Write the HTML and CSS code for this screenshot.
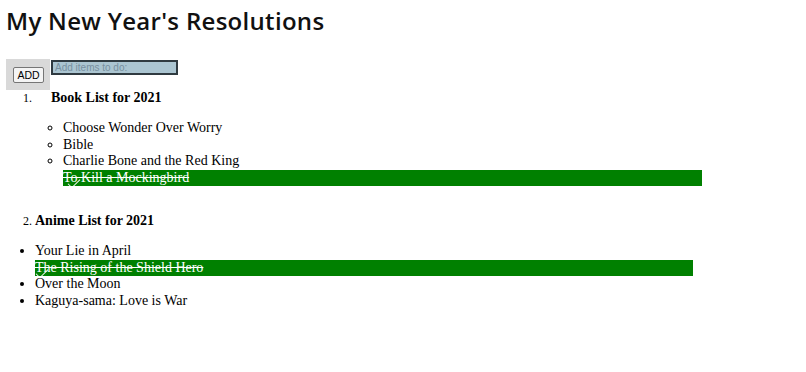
FILE: index.html
```html
<!DOCTYPE html>
<html>
<head>
<meta charset="utf-8">
<title>My New Year's Resolutions</title>
<link rel="stylesheet" href="styles.css">
</head>
<body>
<h1 class="title">My New Year's Resolutions</h1>
<div class="entry">
  <div class="add-box"><button class="add-btn">ADD</button></div>
  <input class="item-input" type="text" placeholder="Add items to do:">
</div>
<ol class="lists">
  <li class="list list-books">
    <h3 class="list-title">Book List for 2021</h3>
    <ul class="items items-books">
      <li class="item">Choose Wonder Over Worry</li>
      <li class="item">Bible</li>
      <li class="item">Charlie Bone and the Red King</li>
      <li class="item checked">To Kill a Mockingbird</li>
    </ul>
  </li>
  <li class="list list-anime">
    <h3 class="list-title">Anime List for 2021</h3>
    <ul class="items items-anime">
      <li class="item">Your Lie in April</li>
      <li class="item checked">The Rising of the Shield Hero</li>
      <li class="item">Over the Moon</li>
      <li class="item">Kaguya-sama: Love is War</li>
    </ul>
  </li>
</ol>
</body>
</html>
```
FILE: styles.css
```css
html, body {
  margin: 0;
  padding: 0;
  background: #ffffff;
}
body {
  padding: 6px;
  font-family: "Liberation Serif", "Times New Roman", serif;
  color: #000;
}
.title {
  margin: 0;
  font-family: "Open Sans", "Lato", sans-serif;
  font-weight: 600;
  font-size: 24px;
  line-height: 29px;
  letter-spacing: 0.3px;
  color: #111;
}
.entry {
  display: flex;
  align-items: flex-start;
  margin-top: 24px;
}
.add-box {
  width: 44px;
  height: 31px;
  background: #d9d9d9;
  box-sizing: border-box;
  padding: 8px 0 0 7px;
}
.add-btn {
  display: block;
  width: 31px;
  height: 16px;
  padding: 0;
  box-sizing: border-box;
  border: 1px solid #767676;
  border-radius: 2px;
  background: #f4f4f4;
  font-family: "Liberation Sans", Arial, sans-serif;
  font-size: 10.5px;
  line-height: 14px;
  color: #000;
}
.item-input {
  margin: 1px 0 0 1px;
  width: 127px;
  height: 15px;
  box-sizing: border-box;
  border: 2px solid #2f3a40;
  background: #abc5d1;
  padding: 0 2px;
  font-family: "Liberation Sans", Arial, sans-serif;
  font-size: 10px;
  outline: none;
}
.item-input::placeholder {
  color: #7890a0;
}
.lists {
  margin: 0;
  padding: 0 0 0 29px;
  font-size: 12px;
}
.list-books {
  padding-left: 16px;
}
.list + .list {
  margin-top: 27px;
}
.list-title {
  margin: 0 0 14px;
  font-size: 14px;
  line-height: 16px;
  font-weight: 700;
}
.items {
  margin: 0;
  font-size: 14px;
  line-height: 16.5px;
}
.items-books {
  list-style: circle;
  padding-left: 12px;
  width: 639px;
}
.items-anime {
  list-style: disc;
  padding-left: 0;
  width: 658px;
}
.item {
  position: relative;
}
.item.checked {
  background: #008000;
  color: #ffffff;
  text-decoration: line-through;
  list-style: none;
}
.item.checked::before {
  content: "";
  position: absolute;
  left: 8px;
  top: 6px;
  width: 5px;
  height: 11px;
  border-style: solid;
  border-color: #ffffff;
  border-width: 0 1px 1px 0;
  transform: rotate(45deg);
}
.items-anime .item.checked::before {
  left: 4px;
  top: 6px;
}
```
